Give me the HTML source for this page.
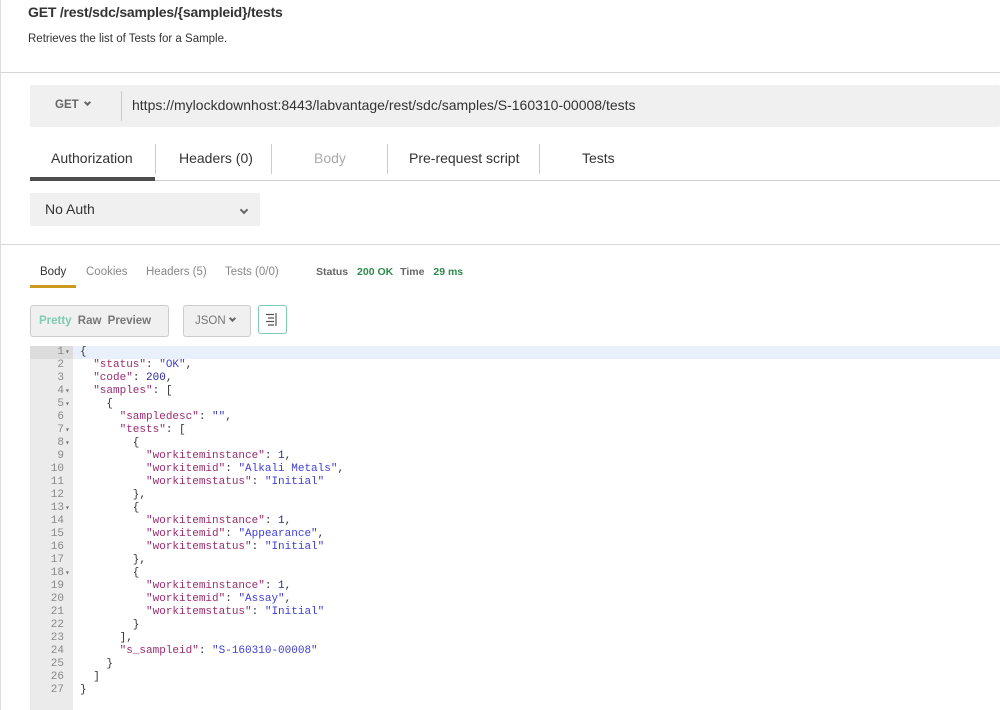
<!DOCTYPE html>
<html><head><meta charset="utf-8"><style>
*{margin:0;padding:0;box-sizing:border-box}
body{width:1000px;height:710px;overflow:hidden;background:#fff;font-family:"Liberation Sans",sans-serif;position:relative;color:#333}
.a{position:absolute;white-space:nowrap}
.k{color:#9a2c6e}.s{color:#3e3ed6}.n{color:#2a2a9a}
pre,pre.a{font-family:"Liberation Mono",monospace;font-size:11px;line-height:13px;color:#333;white-space:pre}
.chev{display:inline-block;width:6px;height:6px;border-right:2px solid #666;border-bottom:2px solid #666;transform:rotate(45deg);vertical-align:3px;margin-left:6px}
</style></head><body>
<div class="a" style="left:0;top:0;width:1px;height:710px;background:#ddd"></div>
<div class="a" style="left:28px;top:4px;font-size:14px;font-weight:bold;color:#333;letter-spacing:-0.2px">GET /rest/sdc/samples/{sampleid}/tests</div>
<div class="a" style="left:28px;top:33px;font-size:11.5px;color:#333">Retrieves the list of Tests for a Sample.</div>
<div class="a" style="left:1px;top:72px;width:999px;height:1px;background:#d6d6d6"></div>
<div class="a" style="left:30px;top:85px;width:970px;height:42px;background:#f0f0f0;border-radius:2px"></div>
<div class="a" style="left:55px;top:99px;font-size:11.5px;font-weight:bold;color:#666">GET<span class="chev" style="width:5px;height:5px"></span></div>
<div class="a" style="left:121px;top:91px;width:1px;height:30px;background:#ccc"></div>
<div class="a" style="left:132px;top:97px;font-size:14px;color:#333">https://mylockdownhost:8443/labvantage/rest/sdc/samples/S-160310-00008/tests</div>
<div class="a" style="left:51px;top:150px;font-size:14px;color:#333">Authorization</div>
<div class="a" style="left:155px;top:144px;width:1px;height:30px;background:#ccc"></div>
<div class="a" style="left:179px;top:150px;font-size:14px;color:#333">Headers (0)</div>
<div class="a" style="left:271px;top:144px;width:1px;height:30px;background:#ccc"></div>
<div class="a" style="left:314px;top:150px;font-size:14px;color:#aaa">Body</div>
<div class="a" style="left:387px;top:144px;width:1px;height:30px;background:#ccc"></div>
<div class="a" style="left:409px;top:150px;font-size:14px;color:#333">Pre-request script</div>
<div class="a" style="left:539px;top:144px;width:1px;height:30px;background:#ccc"></div>
<div class="a" style="left:582px;top:150px;font-size:14px;color:#333">Tests</div>
<div class="a" style="left:30px;top:180px;width:970px;height:1px;background:#d0d0d0"></div>
<div class="a" style="left:30px;top:177px;width:125px;height:4px;background:#4d4d4d"></div>
<div class="a" style="left:30px;top:193px;width:230px;height:33px;background:#f0f0f0"></div>
<div class="a" style="left:45px;top:201px;font-size:14px;color:#333">No Auth</div>
<div class="a" style="left:235px;top:203px"><span class="chev" style="border-color:#666"></span></div>
<div class="a" style="left:1px;top:244px;width:999px;height:1px;background:#d6d6d6"></div>
<div class="a" style="left:40px;top:266px;font-size:11.5px;color:#333">Body</div>
<div class="a" style="left:30px;top:285px;width:46px;height:3px;background:#cc9a1e"></div>
<div class="a" style="left:86px;top:266px;font-size:11.5px;color:#888">Cookies</div>
<div class="a" style="left:146px;top:266px;font-size:11.5px;color:#888">Headers (5)</div>
<div class="a" style="left:225px;top:266px;font-size:11.5px;color:#888">Tests (0/0)</div>
<div class="a" style="left:316px;top:266px;font-size:10.5px;font-weight:bold;color:#666">Status <span style="color:#2f8a4f;margin-left:6px">200 OK</span> <span style="margin-left:4px">Time</span> <span style="color:#2f8a4f;margin-left:6px">29 ms</span></div>
<div class="a" style="left:30px;top:305px;width:139px;height:32px;background:#f0f0f0;border:1px solid #ccc;border-radius:3px"></div>
<div class="a" style="left:39px;top:315px;font-size:11.5px;font-weight:bold;color:#7fcbb0">Pretty <span style="color:#777;margin-left:3px">Raw</span> <span style="color:#777;margin-left:3px">Preview</span></div>
<div class="a" style="left:183px;top:305px;width:68px;height:32px;background:#f0f0f0;border:1px solid #ccc;border-radius:3px"></div>
<div class="a" style="left:195px;top:315px;font-size:11.5px;color:#777">JSON<span class="chev" style="width:5px;height:5px;margin-left:4px"></span></div>
<div class="a" style="left:258px;top:305px;width:29px;height:29px;border:1px solid #7fcbb0;border-radius:3px;background:#fff"></div>
<svg class="a" style="left:265px;top:313px" width="15" height="13"><path d="M1 1.5h8M3 5h6M1 8.5h8M3 12h6M11 0v13" stroke="#555" stroke-width="1.2" fill="none"/></svg>
<div class="a" style="left:30px;top:346px;width:43px;height:364px;background:#ebebeb"></div>
<div class="a" style="left:30px;top:346px;width:43px;height:13px;background:#dcdcdc"></div>
<div class="a" style="left:73px;top:346px;width:927px;height:13px;background:#e8f1fb"></div>
<pre class="a" style="left:30px;top:346px;width:34px;text-align:right;color:#888">1
2
3
4
5
6
7
8
9
10
11
12
13
14
15
16
17
18
19
20
21
22
23
24
25
26
27</pre>
<pre class="a" style="left:65px;top:346px;color:#777;font-size:8px;line-height:13px">▾


▾
▾

▾
▾




▾




▾</pre>
<pre class="a" style="left:80px;top:346px">{
  <span class="k">"status"</span>: <span class="s">"OK"</span>,
  <span class="k">"code"</span>: <span class="n">200</span>,
  <span class="k">"samples"</span>: [
    {
      <span class="k">"sampledesc"</span>: <span class="s">""</span>,
      <span class="k">"tests"</span>: [
        {
          <span class="k">"workiteminstance"</span>: <span class="n">1</span>,
          <span class="k">"workitemid"</span>: <span class="s">"Alkali Metals"</span>,
          <span class="k">"workitemstatus"</span>: <span class="s">"Initial"</span>
        },
        {
          <span class="k">"workiteminstance"</span>: <span class="n">1</span>,
          <span class="k">"workitemid"</span>: <span class="s">"Appearance"</span>,
          <span class="k">"workitemstatus"</span>: <span class="s">"Initial"</span>
        },
        {
          <span class="k">"workiteminstance"</span>: <span class="n">1</span>,
          <span class="k">"workitemid"</span>: <span class="s">"Assay"</span>,
          <span class="k">"workitemstatus"</span>: <span class="s">"Initial"</span>
        }
      ],
      <span class="k">"s_sampleid"</span>: <span class="s">"S-160310-00008"</span>
    }
  ]
}</pre>
</body></html>
